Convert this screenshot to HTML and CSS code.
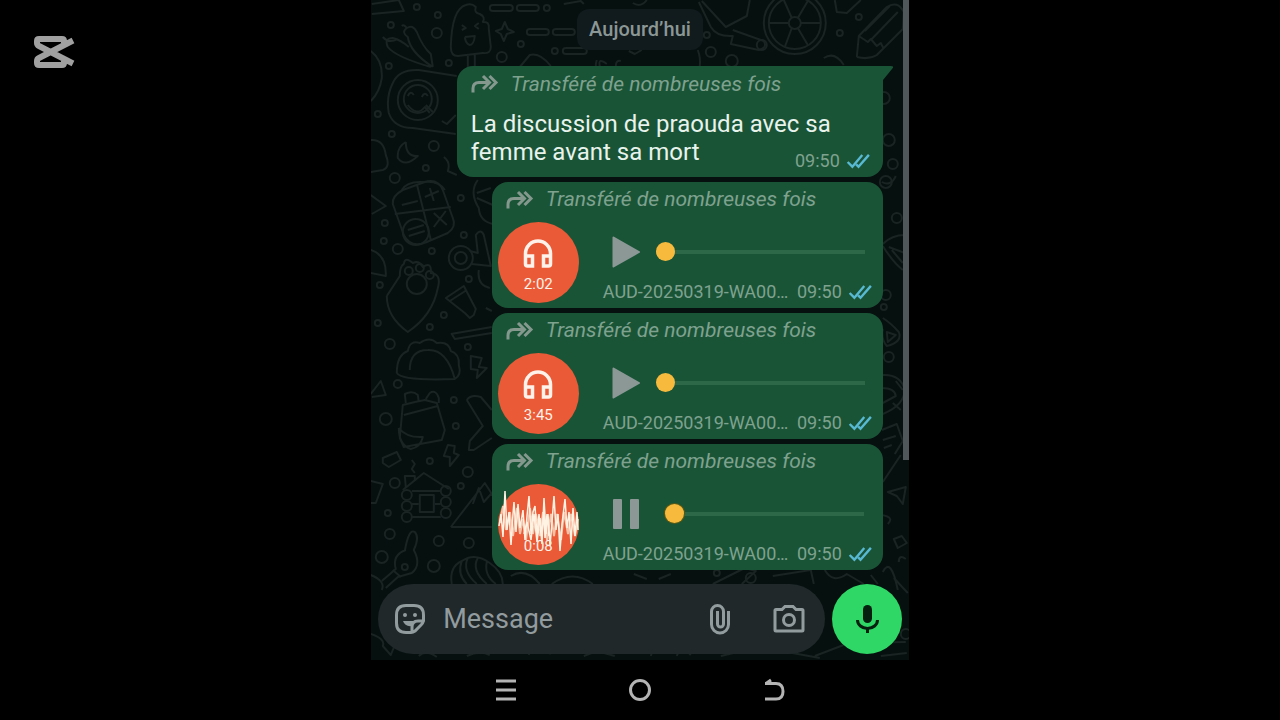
FILE: index.html
```
<!DOCTYPE html>
<html lang="fr">
<head>
<meta charset="utf-8">
<title>Discussion</title>
<link rel="stylesheet" href="styles.css">
</head>
<body>
<svg class="defs" aria-hidden="true">
  <symbol id="forward" viewBox="0 0 28 20"><path d="M2 18.500V14.500Q2 8.500 8 8.500H17M12 2L18.500 8.500L12 15M18.500 2L25 8.500L18.500 15"/></symbol>
  <symbol id="ticks" viewBox="0 0 26 18"><path d="M1.500 9.500L6.500 14.500L17 2M10.500 12L13 14.500L24 2"/></symbol>
  <symbol id="headphones" viewBox="0 0 30 30"><path d="M2.500 25V14.500A12.500 12.500 0 0 1 27.500 14.500V25Q27.500 27 25.500 27H20.500V17H27.500M2.500 17H9.500V27H4.500Q2.500 27 2.500 25"/></symbol>
  <symbol id="play" viewBox="0 0 30 34"><path d="M2.500 2.500L28 17L2.500 31.500Z"/></symbol>
</svg>

<svg class="watermark" viewBox="0 0 42 34" role="img" aria-label="CapCut">
  <path d="M31 8V6Q31 4 29 4H6Q4 4 4 6V8Q4 10 6 11L40 28.500M31 26V28Q31 30 29 30H6Q4 30 4 28V26Q4 24 6 23L40 5.500"/>
</svg>

<main class="phone">
  <section class="chat">
    <svg class="wallpaper" viewBox="0 0 538 660" preserveAspectRatio="xMidYMid slice" aria-hidden="true">
      <path d="M1 4L28 0L33 11L1 14"/>
      <path d="M80 47Q81 9 95 5Q101 3 105 7Q103 13 109 14Q115 17 112 22Q119 21 118 29L120 47Q120 54 112 53L87 56Q80 56 80 47M97 56V68M104 55V66M91 25L95 28L91 30M108 23L104 26L108 29M94 37L104 36Q103 45 99 45Q95 44 94 37"/>
      <path d="M122 5h17a3 3 0 0 1 0 6h-17a3 3 0 0 1 0-6M149 5h16a3 3 0 0 1 0 6h-16a3 3 0 0 1 0-6M159 29h16a3 3 0 0 1 0 6h-16a3 3 0 0 1 0-6M185 29h16a3 3 0 0 1 0 6h-16a3 3 0 0 1 0-6M195 48h18a3 3 0 0 1 0 6h-18a3 3 0 0 1 0-6M193 4L210 1L213 4M262 3Q270 8 276 0"/>
      <path d="M134 22L137 29L143 32L136 34L133 41L130 34L125 31L131 29Z"/>
      <path d="M62 67L60 54Q52 47 46 32Q42 24 36 28Q30 32 37 37Q39 52 62 67M17 47Q13 38 22 38Q30 40 38 47M17 47Q25 57 60 67M12 37Q18 44 27 39M36 28Q33 24 31 26"/>
      <path d="M0 51Q12 60 11 78Q9 92 0 101M86 76L48 70Q28 69 22 83Q15 97 18 113Q23 128 42 128L85 134M71 121L76 124L85 115"/>
      <circle cx="47" cy="100" r="20"/><circle cx="47" cy="99" r="14"/>
      <path d="M37 96Q40 90 43 95M51 97Q54 91 57 96M37 105Q46 117 54 107L59 113M55 105L62 112"/>
      <path d="M35 142Q26 147 27 158Q34 168 47 156Q35 157 35 142M0 140Q13 139 15 155Q20 167 12 170L0 172M73 157Q80 162 77 171L86 175M31 190Q36 181 52 182Q68 180 74 190"/>
      <path d="M149 67L159 55Q169 52 180 66M226 60Q223 70 229 66Q227 57 236 64M245 66Q245 60 250 61M258 51L264 54L271 50M327 50Q330 58 329 66"/>
      <path d="M328 2L340 27Q346 37 362 36L360 44L388 50Q397 48 393 41L362 30M331 1L355 27L376 16L379 0"/>
      <circle cx="424" cy="23" r="31"/><circle cx="424" cy="23" r="26"/><circle cx="424" cy="23" r="6"/>
      <path d="M430 23H450M427 28L437 45M421 28L414 47M418 23H398M421 18L413 0M427 18L437 1M464 0L466 12L476 13L490 0"/>
      <path d="M486 57L488 36L516 7Q527 0 533 12L532 29L506 55Q498 60 486 57M488 36L497 42L500 39L506 46L510 43L513 49M494 31L519 6M501 39L527 12"/>
      <path d="M453 58Q464 51 473 65"/>

      <path d="M32 190Q21 196 22 204L33 235Q40 249 56 242L77 233Q86 227 82 218L72 190Q67 178 54 182ZM46 184L60 240M24 214L80 207M31 205L47 201M54 197L68 191M59 188L63 201M63 213L76 225M75 211L63 227"/>
      <circle cx="45" cy="232" r="13"/><path d="M37 230L53 225M38 236L54 231M0 195L15 206L1 214M0 250Q16 255 15 276L0 273"/>
      <path d="M107 180Q98 192 108 208Q109 222 123 224M106 193L120 188M106 198L122 205"/>
      <circle cx="90" cy="258" r="12"/><circle cx="90" cy="258" r="6"/><path d="M99 251L107 253L105 235Q110 228 113 235L120 266L101 264M108 270Q106 285 119 288"/>
      <path d="M16 296L29 276Q29 266 33 264Q34 256 42 263Q48 260 52 267Q61 261 60 273Q71 274 67 288Q62 315 37 332Q16 317 16 296"/>
      <circle cx="46" cy="284" r="10"/><circle cx="38" cy="271" r="4"/><circle cx="49" cy="268" r="4"/><circle cx="59" cy="275" r="4"/>
      <path d="M75 298L93 286L105 309L103 315L99 318L94 313ZM79 301L96 290M81 334L84 339L121 333M80 334L121 327M115 308L121 311"/>
      <path d="M26 373Q26 355 37 351Q39 340 49 343Q59 336 66 343Q78 341 80 351Q89 354 88 365Q91 375 84 379Q31 381 26 373M39 370Q39 350 57 350Q76 349 84 379M100 356L111 358L108 367L116 368L106 378L107 370L100 369Z"/>

      <path d="M32 405Q43 402 54 400L66 403L74 430L71 440L33 447L29 438ZM33 415L67 406M35 403L34 394Q42 390 47 395L48 402M55 399L59 393Q65 389 68 398L68 403M28 428Q36 438 52 437Q50 447 40 449Q28 445 28 428"/>
      <path d="M0 394L10 381L15 395L1 397M96 400Q100 394 110 397L121 410M96 400L112 426L99 441L98 450L103 450L121 438M77 445L84 446L83 453L88 455L79 466L79 457L73 456ZM12 458L26 452L30 460L18 467L12 463Z"/>
      <path d="M41 460L44 464L41 469L44 473M35 487L34 476L44 476V480M32 490L53 473L78 489M41 491H70M41 504H48M64 504H70M41 517H70"/>
      <circle cx="36" cy="495" r="5"/><circle cx="36" cy="506" r="5"/><circle cx="36" cy="517" r="5"/><circle cx="75" cy="491" r="5"/><circle cx="75" cy="502" r="5"/><circle cx="75" cy="513" r="5"/>
      <path d="M49 495H63V512H49ZM80 527L114 483L123 497M80 527H121M102 504L108 488L113 502L121 493M0 481L12 484L5 503H0"/>
      <path d="M34 551Q38 528 44 532Q49 537 43 550Q51 565 41 573L27 577L15 588M35 550Q21 555 25 569L11 581"/><circle cx="34" cy="567" r="3"/>
      <path d="M81 584Q78 567 91 561Q104 552 119 563Q132 572 132 584M91 561Q86 574 96 584M97 558Q91 571 106 584M107 558Q100 570 116 584M116 562Q113 575 125 584"/>
      <path d="M0 575Q15 581 11 590M22 570L30 577M0 634Q15 639 12 646L20 655L26 640M48 656Q55 649 66 657M96 656Q109 650 119 655M158 655Q160 642 180 654M213 656L226 651L244 656M280 656L285 640M306 656Q310 644 320 655M350 656L388 647L449 658M444 656L478 643L535 642M510 656L536 653"/>
      <path d="M140 576Q155 567 169 584M181 584Q202 569 222 584M263 574L276 579M288 579L300 574M342 584L374 568L385 571L371 584M402 576L440 570L443 584M454 570Q462 584 476 574L493 584M500 575L507 584M523 578L537 593"/>
      <path d="M512 244Q521 235 534 235M512 246Q522 262 532 270M518 247L534 253M521 250L532 263M512 318Q520 323 528 332Q532 342 516 346Q510 339 512 329M516 332L525 335L517 342ZM512 375Q529 374 534 389Q534 405 512 414M511 388Q524 388 525 396L512 403M525 381L532 390M522 403L530 410M511 430L526 424L532 441L524 454M512 440L525 436M513 448L521 445M512 482L530 455"/>
      <path d="M517 492L535 487L532 504L526 496ZM511 515Q524 517 517 524M523 539L531 536L536 543L527 548ZM528 562Q528 554 535 559M512 572Q520 556 527 590M511 182Q520 187 525 176"/>
      <g>
        <circle cx="46" cy="7" r="3"/><circle cx="67" cy="15" r="3"/><circle cx="20" cy="25" r="3"/><circle cx="66" cy="33" r="5"/><circle cx="176" cy="8" r="3"/><circle cx="150" cy="44" r="3"/><circle cx="131" cy="57" r="5"/><circle cx="184" cy="51" r="3"/><circle cx="78" cy="63" r="3"/><circle cx="18" cy="66" r="3"/><circle cx="7" cy="114" r="3"/><circle cx="21" cy="134" r="3"/><circle cx="63" cy="146" r="5"/><circle cx="55" cy="168" r="3"/><circle cx="24" cy="178" r="5"/>
        <circle cx="336" cy="35" r="3"/><circle cx="340" cy="52" r="5"/><circle cx="361" cy="61" r="6"/><circle cx="391" cy="45" r="5"/><circle cx="469" cy="33" r="3"/><circle cx="488" cy="17" r="3"/><circle cx="513" cy="98" r="6"/><circle cx="518" cy="140" r="6"/><circle cx="522" cy="164" r="5"/><circle cx="515" cy="182" r="6"/><circle cx="526" cy="218" r="5"/><circle cx="515" cy="295" r="5"/><circle cx="513" cy="307" r="3"/><circle cx="518" cy="357" r="5"/>
        <circle cx="90" cy="198" r="3"/><circle cx="14" cy="223" r="3"/><circle cx="13" cy="241" r="3"/><circle cx="27" cy="249" r="5"/><circle cx="61" cy="251" r="3"/><circle cx="93" cy="235" r="3"/><circle cx="98" cy="279" r="3"/><circle cx="9" cy="285" r="3"/><circle cx="73" cy="315" r="3"/><circle cx="59" cy="327" r="3"/><circle cx="7" cy="323" r="3"/><circle cx="19" cy="344" r="5"/><circle cx="97" cy="347" r="3"/><circle cx="27" cy="384" r="4"/><circle cx="15" cy="419" r="6"/><circle cx="83" cy="400" r="3"/><circle cx="85" cy="426" r="3"/><circle cx="59" cy="461" r="3"/><circle cx="97" cy="472" r="5"/><circle cx="24" cy="483" r="5"/><circle cx="90" cy="486" r="3"/><circle cx="17" cy="513" r="3"/><circle cx="19" cy="534" r="5"/><circle cx="68" cy="541" r="5"/><circle cx="98" cy="543" r="5"/><circle cx="11" cy="557" r="6"/><circle cx="63" cy="566" r="6"/>
        <circle cx="346" cy="573" r="3"/><circle cx="380" cy="578" r="5"/><circle cx="500" cy="639" r="5"/><circle cx="535" cy="634" r="5"/>
      </g>
    </svg>
    <div class="scrollbar"></div>

    <div class="messages">
      <p class="date">Aujourd’hui</p>

      <article class="bubble text-bubble">
        <svg class="tail" viewBox="0 0 26 16" aria-hidden="true"><path d="M0 0H24Q28 0 25 3L16 14V16H0Z"/></svg>
        <p class="forwarded"><svg class="forward"><use href="#forward"/></svg>Transféré de nombreuses fois</p>
        <div class="body">
          <p class="text">La discussion de praouda avec sa femme avant sa mort</p>
          <p class="meta"><time>09:50</time><svg class="ticks"><use href="#ticks"/></svg></p>
        </div>
      </article>

      <article class="bubble audio-bubble">
        <p class="forwarded"><svg class="forward"><use href="#forward"/></svg>Transféré de nombreuses fois</p>
        <div class="audio">
          <div class="disc"><svg class="headphones"><use href="#headphones"/></svg><span>2:02</span></div>
          <div class="player">
            <div class="controls">
              <button class="toggle" aria-label="Lire"><svg class="play"><use href="#play"/></svg></button>
              <input class="seek" type="range" min="0" max="100" value="0" aria-label="Position">
            </div>
            <div class="file"><span class="name">AUD-20250319-WA00…</span><time>09:50</time><svg class="ticks"><use href="#ticks"/></svg></div>
          </div>
        </div>
      </article>

      <article class="bubble audio-bubble">
        <p class="forwarded"><svg class="forward"><use href="#forward"/></svg>Transféré de nombreuses fois</p>
        <div class="audio">
          <div class="disc"><svg class="headphones"><use href="#headphones"/></svg><span>3:45</span></div>
          <div class="player">
            <div class="controls">
              <button class="toggle" aria-label="Lire"><svg class="play"><use href="#play"/></svg></button>
              <input class="seek" type="range" min="0" max="100" value="0" aria-label="Position">
            </div>
            <div class="file"><span class="name">AUD-20250319-WA00…</span><time>09:50</time><svg class="ticks"><use href="#ticks"/></svg></div>
          </div>
        </div>
      </article>

      <article class="bubble audio-bubble">
        <p class="forwarded"><svg class="forward"><use href="#forward"/></svg>Transféré de nombreuses fois</p>
        <div class="audio">
          <div class="disc playing">
            <svg class="wave" viewBox="0 0 81 81" aria-hidden="true"><path class="shade" d="M2 39L5 22L8 46L12 28L15 52L19 24L22 50L25 35L28 56L32 24L35 50L38 30L42 52L45 28L49 56L53 30L56 52L59 30L63 56L66 28L70 50L73 30L77 52L80 35"/><path d="M1 42L3 30L5 53L7 7L9 46L11 28L13 61L15 30L16 18L18 48L20 20L22 44L25 26L27 56L29 32L31 12L33 50L35 28L37 22L39 52L41 30L44 60L46 14L48 50L50 30L52 62L54 38L56 12L58 46L60 30L62 67L64 40L67 15L69 44L71 28L73 60L75 24L77 52L79 28L80 46"/><path d="M26 50L29 38L33 56L36 30L39 58L42 34L44 50L46 28L47 54L49 30L51 52"/></svg>
            <span>0:08</span>
          </div>
          <div class="player">
            <div class="controls">
              <button class="toggle" aria-label="Pause"><svg class="pause" viewBox="0 0 28 30"><rect x="1" width="9" height="30" rx="1"/><rect x="18" width="9" height="30" rx="1"/></svg></button>
              <input class="seek active" type="range" min="0" max="100" value="5" aria-label="Position">
            </div>
            <div class="file"><span class="name">AUD-20250319-WA00…</span><time>09:50</time><svg class="ticks"><use href="#ticks"/></svg></div>
          </div>
        </div>
      </article>
    </div>

    <form class="composer">
      <div class="field">
        <button type="button" aria-label="Autocollants"><svg class="icon" viewBox="0 0 32 32"><path d="M12 2.500H20Q29.500 2.500 29.500 12V18Q29 20 27 22L21 28Q19 29.500 17 29.500H12Q2.500 29.500 2.500 20V12Q2.500 2.500 12 2.500ZM29 18H24Q18 18 18 24V29"/><path class="solid" d="M9 18H21L18 23Q11 24 9 18Z"/><circle class="solid" cx="11" cy="12" r="2"/><circle class="solid" cx="21" cy="12" r="2"/></svg></button>
        <input type="text" placeholder="Message" aria-label="Message">
        <button type="button" aria-label="Joindre"><svg class="clip" viewBox="0 0 20 32"><path d="M18.500 8V21.500A8.500 8.500 0 0 1 1.500 21.500V8.500A6 6 0 0 1 13.500 8.500V21A3 3 0 0 1 7.500 21V8"/></svg></button>
        <button type="button" aria-label="Appareil photo"><svg class="icon" viewBox="0 0 32 32"><path d="M3 6.500H9L12 3.500H20L23 6.500H29Q30 6.500 30 7.500V27Q30 28 29 28H3Q2 28 2 27V7.500Q2 6.500 3 6.500Z"/><circle cx="16" cy="17" r="5.500"/></svg></button>
      </div>
      <button type="button" class="mic" aria-label="Message vocal"><svg viewBox="0 0 24 32"><rect class="solid" x="8" y="2" width="9" height="18" rx="4.500"/><path d="M2.500 17A10 8.500 0 0 0 22.500 17M12.500 24V30"/></svg></button>
    </form>
  </section>

  <nav class="system">
    <button aria-label="Menu"><svg viewBox="0 0 24 24"><path d="M2 3H22M2 12H22M2 21H22"/></svg></button>
    <button aria-label="Accueil"><svg viewBox="0 0 24 24"><circle cx="12" cy="12" r="9.500"/></svg></button>
    <button aria-label="Retour"><svg viewBox="0 0 24 24"><path d="M3 5.500H14Q21 5.500 21 13.500Q21 21 14 21H3M9 2L4 5.500"/></svg></button>
  </nav>
</main>
</body>
</html>
```
FILE: styles.css
```
* { box-sizing: border-box; }
body {
  margin: 0;
  min-height: 100vh;
  background: #000;
  font-family: Roboto, "Noto Sans", sans-serif;
  color: #8b9795;
}
p { margin: 0; }
svg { display: block; flex: none; fill: none; stroke: currentColor; }
button { padding: 0; border: 0; background: none; color: inherit; font: inherit; }
.solid { fill: currentColor; stroke: none; }
.defs { position: absolute; width: 0; height: 0; }

.watermark {
  position: absolute;
  left: 33px;
  top: 35px;
  width: 42px;
  height: 34px;
  color: #a0a0a0;
  stroke-width: 6;
}

.phone {
  display: flex;
  flex-direction: column;
  width: 42%;
  min-width: 480px;
  min-height: 100vh;
  margin: 0 auto;
}
.chat {
  position: relative;
  display: flex;
  flex: 1;
  flex-direction: column;
  justify-content: space-between;
  overflow: hidden;
  background: #06100f;
}
.wallpaper {
  position: absolute;
  inset: 0;
  width: 100%;
  height: 100%;
  color: #192423;
  stroke-width: 2;
  stroke-linejoin: round;
}
.scrollbar {
  position: absolute;
  top: 0;
  right: 0;
  width: 6px;
  height: 460px;
  background: #50575a;
}

.messages {
  position: relative;
  display: flex;
  flex-direction: column;
  align-items: flex-end;
  gap: 5px;
  padding: 9px 26px 0;
}
.date {
  align-self: center;
  margin-bottom: 11px;
  padding: 0 12px;
  border-radius: 12px;
  background: #111a1d;
  font-size: 20px;
  font-weight: 500;
  line-height: 41px;
}
.bubble {
  position: relative;
  border-radius: 16px;
  background: #1a5437;
  color: #7fa28f;
}
.text-bubble { width: 426px; padding: 0 12px 11px 14px; border-top-right-radius: 0; }
.audio-bubble { width: 391px; padding: 0 18px 5px 6px; }
.tail {
  position: absolute;
  top: 0;
  right: -10px;
  width: 26px;
  height: 16px;
  fill: #1a5437;
  stroke: none;
}
.forwarded {
  display: flex;
  align-items: center;
  gap: 12px;
  font-size: 21px;
  font-style: italic;
  line-height: 36px;
  white-space: nowrap;
}
.audio-bubble .forwarded { padding-left: 8px; line-height: 35px; }
.forward { width: 28px; height: 20px; stroke-width: 3; color: #84988e; }
.body {
  display: flex;
  align-items: flex-end;
  justify-content: space-between;
  padding-top: 8px;
}
.text { flex: 1; margin-right: -40px; color: #e8f3ec; font-size: 24px; line-height: 28px; }
.meta {
  display: flex;
  align-items: center;
  gap: 6px;
  margin-bottom: -6px;
}
.meta, .file { font-size: 18px; line-height: 22px; }
.ticks { width: 25px; height: 17px; color: #58b9d3; stroke-width: 2.500; }

.audio { display: flex; gap: 24px; padding-top: 5px; }
.disc {
  position: relative;
  display: flex;
  flex: none;
  flex-direction: column;
  align-items: center;
  width: 81px;
  height: 81px;
  padding-top: 17px;
  border-radius: 50%;
  background: #eb5a36;
  color: #fff2ea;
  font-size: 15px;
  line-height: 18px;
}
.disc.playing { justify-content: flex-end; padding: 0 0 10px; }
.headphones { width: 30px; height: 30px; margin-bottom: 6px; stroke-width: 3.500; }
.wave { position: absolute; inset: 0; width: 100%; height: 100%; stroke: #fff3e4; stroke-width: 1.500; }
.wave .shade { stroke: #f7c3a8; stroke-width: 2; }
.disc span { position: relative; }
.player { display: flex; flex: 1; flex-direction: column; min-width: 0; justify-content: space-between; }
.controls { display: flex; align-items: center; gap: 15px; height: 59px; padding-left: 8px; color: #8b9896; }
.toggle { display: grid; place-items: center; width: 30px; height: 34px; }
.play { width: 30px; height: 34px; fill: currentColor; stroke-width: 2; stroke-linejoin: round; }
.pause { width: 28px; height: 30px; fill: currentColor; stroke: none; }
.seek {
  flex: 1;
  min-width: 0;
  height: 20px;
  margin: 0;
  background: linear-gradient(#2d6849, #2d6849) center / 100% 4px no-repeat;
  appearance: none;
}
.seek.active { background: linear-gradient(#2d6849, #2d6849) right center / 94% 4px no-repeat; }
.seek::-webkit-slider-thumb { width: 19px; height: 19px; border-radius: 50%; background: #f8ba3d; appearance: none; }
.seek.active::-webkit-slider-thumb { box-shadow: 0 0 0 1px #5a5a14; }
.file { display: flex; align-items: center; gap: 6px; margin-right: -8px; }
.name { flex: 1; min-width: 0; white-space: nowrap; }

.composer { position: relative; display: flex; gap: 7px; padding: 0 7px 6px; }
.field {
  display: flex;
  flex: 1;
  align-items: center;
  min-width: 0;
  height: 70px;
  padding: 0 20px 0 16px;
  border-radius: 35px;
  background: #20282a;
  color: #929b9e;
}
.field input {
  flex: 1;
  min-width: 0;
  padding: 0 0 0 17px;
  border: 0;
  outline: 0;
  background: none;
  color: inherit;
  font: 27px/32px Roboto, "Noto Sans", sans-serif;
}
.field input::placeholder { color: inherit; opacity: 1; }
.icon { width: 32px; height: 32px; stroke-width: 3; }
.clip { width: 20px; height: 32px; margin-right: 43px; stroke-width: 3; }
.mic {
  display: grid;
  place-items: center;
  width: 70px;
  height: 70px;
  border-radius: 50%;
  background: #2fd866;
  color: #06200f;
}
.mic svg { width: 24px; height: 32px; stroke-width: 3; }

.system { display: flex; justify-content: center; gap: 110px; height: 60px; color: #b4b4b4; }
.system svg { width: 24px; height: 24px; stroke-width: 3; stroke-linejoin: round; }
```
